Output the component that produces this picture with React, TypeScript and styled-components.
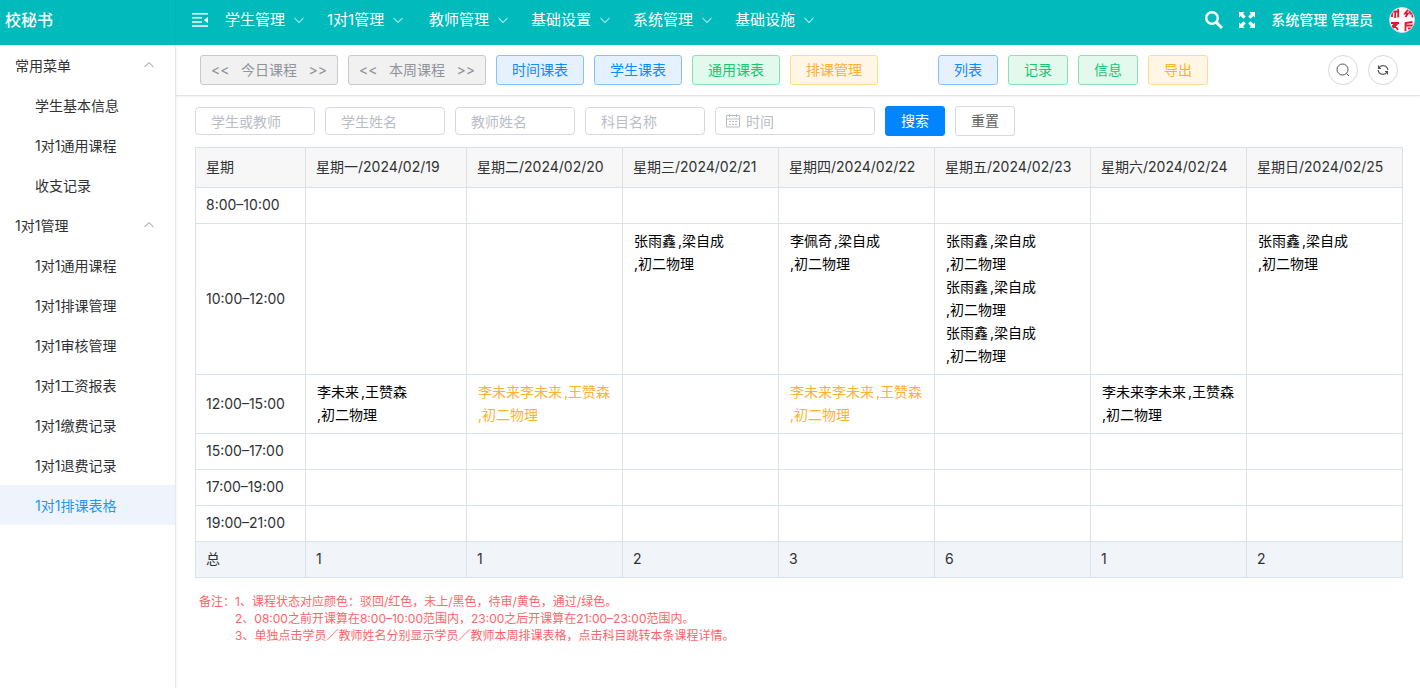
import React, { Fragment } from "react";
import styled, { createGlobalStyle } from "styled-components";

const GlobalStyle = createGlobalStyle`
  *, *::before, *::after { box-sizing: border-box; }
  body {
    margin: 0;
    background: #fff;
    color: #303133;
    font-family: Inter, "Noto Sans CJK SC", sans-serif;
    font-size: 14px;
    line-height: 20px;
  }
  button, input { font-family: inherit; }
  a { color: inherit; text-decoration: none; }
  ul { list-style: none; margin: 0; padding: 0; }
`;

const Page = styled.div`
  display: grid;
  grid-template-columns: 176px minmax(0, 1fr);
  grid-template-rows: auto 1fr;
  min-height: 100vh;
`;

const Brand = styled.div`
  display: flex;
  align-items: center;
  height: 45px;
  padding: 0 5px 5px;
  background: #00babc;
  border-right: 1px solid #00b0b3;
  color: #fff;
  font-size: 16px;
  font-weight: 500;
`;

const TopBar = styled.header`
  display: flex;
  align-items: center;
  height: 45px;
  padding: 0 5px 5px 16px;
  background: #00babc;
  color: #fff;
`;

const IconButton = styled.button`
  display: flex;
  padding: 0;
  border: 0;
  background: none;
  color: inherit;
  cursor: pointer;
`;

const TopNav = styled.nav`
  display: flex;
  flex: 1;
  padding-left: 17px;
`;

const TopNavItem = styled.a`
  display: flex;
  align-items: center;
  gap: 8px;
  width: 80px;
  margin-right: 22px;
  font-size: 15px;
  white-space: nowrap;
`;

const UserArea = styled.div`
  display: flex;
  align-items: center;
  gap: 16px;
`;

const UserName = styled.span`
  font-weight: 500;
  white-space: nowrap;
`;

const Sidebar = styled.nav`
  border-right: 1px solid #e9e9eb;
  box-shadow: 1px 0 2px rgba(0, 0, 0, 0.05);
`;

const GroupToggle = styled.button`
  display: flex;
  align-items: center;
  justify-content: space-between;
  width: 100%;
  height: 40px;
  padding: 0 20px 0 15px;
  border: 0;
  background: none;
  color: #303133;
  font-size: 14px;
  svg { color: #909399; }
`;

const SideLink = styled.a<{ $active?: boolean }>`
  display: flex;
  align-items: center;
  height: 40px;
  padding: 2px 0 0 35px;
  background: ${(p) => (p.$active ? "#eff4fc" : "transparent")};
  color: ${(p) => (p.$active ? "#2196f8" : "#303133")};
`;

const Toolbar = styled.div`
  display: flex;
  align-items: center;
  gap: 10px;
  height: 51px;
  padding: 0 22px 0 24px;
  border-bottom: 1px solid #e4e4e6;
  box-shadow: 0 1px 2px rgba(0, 0, 0, 0.06);
`;

const tones = {
  info: { bg: "#f1f1f2", line: "#c8c9cc", text: "#909399" },
  primary: { bg: "#e5f1ff", line: "#85c3ff", text: "#1289ff" },
  success: { bg: "#e3f9ee", line: "#86e2b2", text: "#16c76c" },
  warning: { bg: "#fff6e6", line: "#ffdc8c", text: "#ffb02e" },
};

const Button = styled.button<{ $tone?: keyof typeof tones; $solid?: boolean }>`
  height: 30px;
  padding: 0 15px;
  border: 1px solid
    ${(p) => (p.$solid ? "#0084ff" : p.$tone ? tones[p.$tone].line : "#d6d9e2")};
  border-radius: 3px;
  background: ${(p) => (p.$solid ? "#0084ff" : p.$tone ? tones[p.$tone].bg : "#fff")};
  color: ${(p) => (p.$solid ? "#fff" : p.$tone ? tones[p.$tone].text : "#606266")};
  font-size: 14px;
  line-height: 20px;
  white-space: nowrap;
  cursor: pointer;
`;

const Stepper = styled.div`
  display: flex;
  align-items: center;
  justify-content: space-between;
  width: 138px;
  height: 30px;
  padding: 0 10px;
  border: 1px solid ${tones.info.line};
  border-radius: 3px;
  background: ${tones.info.bg};
  color: ${tones.info.text};
`;

const StepButton = styled(IconButton)`
  font-size: 14px;
  line-height: 20px;
`;

const ButtonGroup = styled.div`
  display: flex;
  flex: 1;
  gap: 10px;
  padding-left: 50px;
`;

const RoundButton = styled.button`
  display: flex;
  align-items: center;
  justify-content: center;
  width: 30px;
  height: 30px;
  padding: 0;
  border: 1px solid #d6d9e2;
  border-radius: 50%;
  background: #fff;
  color: #505256;
`;

const Content = styled.main`
  padding: 10px 17px 24px 19px;
`;

const Filters = styled.form`
  display: flex;
  align-items: center;
  gap: 10px;
  margin-bottom: 11px;
`;

const Field = styled.label<{ $wide?: boolean }>`
  display: flex;
  align-items: center;
  gap: 6px;
  width: ${(p) => (p.$wide ? 160 : 120)}px;
  height: 28px;
  padding: 0 ${(p) => (p.$wide ? 10 : 15)}px;
  border: 1px solid #d6d9e2;
  border-radius: 4px;
  color: #b9bdc6;
  svg { flex: none; }
`;

const TextInput = styled.input`
  width: 100%;
  min-width: 0;
  height: 26px;
  padding: 0;
  border: 0;
  outline: 0;
  background: none;
  color: #606266;
  font-size: 14px;
  &::placeholder { color: #b9bdc6; opacity: 1; }
`;

const Schedule = styled.table`
  width: 100%;
  table-layout: fixed;
  border-collapse: collapse;
  th, td {
    padding: 5px 10px 7px;
    border: 1px solid #d9e1e9;
    font-weight: 400;
    line-height: 23px;
    text-align: left;
    white-space: nowrap;
  }
  thead th { height: 40px; background: #f7f7f7; }
  tbody td { vertical-align: top; }
  tfoot th, tfoot td { background: #f1f5f9; }
`;

const TimeCol = styled.col` width: 110px; `;
const MondayCol = styled.col` width: 161px; `;

const Lesson = styled.div<{ $pending?: boolean }>`
  padding-left: 1px;
  color: ${(p) => (p.$pending ? "#ffb130" : "#000")};
`;

const Student = styled.a`
  margin-right: 2px;
`;

const Notes = styled.div`
  display: flex;
  padding: 15px 4px;
  color: #ff6468;
  font-size: 12px;
  line-height: 17px;
  ol { list-style: none; margin: 0; padding: 0; }
`;

const Chevron = ({ up }: { up?: boolean }) => (
  <svg width="12" height="12" viewBox="0 0 12 12" fill="none" stroke="currentColor" strokeWidth="1">
    <path d={up ? "M1.5 8 6 3.5 10.5 8" : "M1.5 4 6 8.5 10.5 4"} />
  </svg>
);

const FoldIcon = () => (
  <svg width="16" height="14" viewBox="0 0 16 14" fill="currentColor">
    <path d="M0 0h16v1.5H0zM0 4h10v1.5H0zM0 8.300h10v1.500H0zM0 12.300h16v1.500H0zM16 4v6L11.800 7z" />
  </svg>
);

const SearchIcon = () => (
  <svg width="18" height="18" viewBox="0 0 18 18" fill="none" stroke="currentColor" strokeWidth="2.4">
    <circle cx="7" cy="7" r="5.8" />
    <path d="M11.2 11.2 17 17" strokeWidth="3" />
  </svg>
);

const FullscreenIcon = () => (
  <svg width="16" height="16" viewBox="0 0 16 16" fill="currentColor">
    <path d="M0 0h5.600L4 1.600 6.700 4.500 4.500 6.700 1.600 4 0 5.600zM16 0v5.600L14.400 4l-2.900 2.700-2.200-2.200L12 1.600 10.400 0zM0 16v-5.600L1.600 12l2.900-2.700 2.200 2.200L4 14.400 5.600 16zM16 16h-5.600l1.600-1.600-2.700-2.900 2.200-2.200 2.900 2.700 1.600-1.600z" />
  </svg>
);

const Avatar = () => (
  <svg width="26" height="26" viewBox="0 0 26 26" role="img" aria-label="avatar">
    <defs>
      <clipPath id="avatar-disc"><circle cx="13" cy="13" r="12" /></clipPath>
    </defs>
    <circle cx="13" cy="13" r="12.5" fill="#fff" stroke="#d8dce6" />
    <g clipPath="url(#avatar-disc)" stroke="#e5172f" strokeWidth="1.8" fill="none">
      <path d="M2 4.500h8M3 4v6M6.200 4v7M9.200 2v8.500" />
      <path d="M19.500 2 16 6.500h3L16.500 10M20 3.500l4 4M20.500 6.500h3V10.500" />
      <path d="M2 16h8M4 16l5 7M9 16l-6 6M3 19h4" />
      <path d="M16.500 24v-8l7-1M17 18.500h8M19 21.500h5v3" />
    </g>
  </svg>
);

const ThinSearchIcon = () => (
  <svg width="14" height="14" viewBox="0 0 14 14" fill="none" stroke="currentColor">
    <circle cx="6.5" cy="6.5" r="5.5" />
    <path d="M10.5 10.5 13 13" />
  </svg>
);

const RefreshIcon = () => (
  <svg width="12" height="12" viewBox="0 0 12 12" fill="none" stroke="currentColor" strokeWidth="1.200">
    <path d="M1.800 4.200A4.800 4.800 0 0 1 10.800 6M10.200 7.800A4.800 4.800 0 0 1 1.200 6M1.500 1.500v3h2.500M10.500 10.500v-3H8" />
  </svg>
);

const CalendarIcon = () => (
  <svg width="14" height="14" viewBox="0 0 14 14" fill="none" stroke="currentColor">
    <path d="M.5 1.500h13v11.500H.5zM.5 5h13M3.500 0v3M10.500 0v3" />
    <path d="M3 7.500h2M6 7.500h2M9 7.500h2M3 10.500h2M6 10.500h2M9 10.500h2" />
  </svg>
);

const topMenu = ["学生管理", "1对1管理", "教师管理", "基础设置", "系统管理", "基础设施"];

const sideGroups = [
  { title: "常用菜单", items: ["学生基本信息", "1对1通用课程", "收支记录"] },
  {
    title: "1对1管理",
    items: [
      "1对1通用课程", "1对1排课管理", "1对1审核管理", "1对1工资报表",
      "1对1缴费记录", "1对1退费记录", "1对1排课表格",
    ],
  },
];
const activeItem = "1对1排课表格";

const days = [
  "星期一/2024/02/19", "星期二/2024/02/20", "星期三/2024/02/21", "星期四/2024/02/22",
  "星期五/2024/02/23", "星期六/2024/02/24", "星期日/2024/02/25",
];

type Entry = { student: string; teacher: string; pending?: boolean };
const zhang: Entry = { student: "张雨鑫", teacher: "梁自成" };
const peiqi: Entry = { student: "李佩奇", teacher: "梁自成" };
const weilai: Entry = { student: "李未来", teacher: "王赞森" };
const pair: Entry = { student: "李未来李未来", teacher: "王赞森" };
const pairPending: Entry = { ...pair, pending: true };

const rows: { time: string; cells: Entry[][] }[] = [
  { time: "8:00–10:00", cells: [[], [], [], [], [], [], []] },
  { time: "10:00–12:00", cells: [[], [], [zhang], [peiqi], [zhang, zhang, zhang], [], [zhang]] },
  { time: "12:00–15:00", cells: [[weilai], [pairPending], [], [pairPending], [], [pair], []] },
  { time: "15:00–17:00", cells: [[], [], [], [], [], [], []] },
  { time: "17:00–19:00", cells: [[], [], [], [], [], [], []] },
  { time: "19:00–21:00", cells: [[], [], [], [], [], [], []] },
];
const totals = [1, 1, 2, 3, 6, 1, 2];

export default function App() {
  return (
    <Page>
      <GlobalStyle />
      <Brand>校秘书</Brand>
      <TopBar>
        <IconButton aria-label="收起菜单"><FoldIcon /></IconButton>
        <TopNav>
          {topMenu.map((item) => (
            <TopNavItem href="#" key={item}>{item}<Chevron /></TopNavItem>
          ))}
        </TopNav>
        <UserArea>
          <IconButton aria-label="搜索"><SearchIcon /></IconButton>
          <IconButton aria-label="全屏"><FullscreenIcon /></IconButton>
          <UserName>系统管理 管理员</UserName>
          <Avatar />
        </UserArea>
      </TopBar>

      <Sidebar>
        {sideGroups.map((group) => (
          <Fragment key={group.title}>
            <GroupToggle>{group.title}<Chevron up /></GroupToggle>
            <ul>
              {group.items.map((item) => (
                <li key={item}>
                  <SideLink href="#" $active={item === activeItem}>{item}</SideLink>
                </li>
              ))}
            </ul>
          </Fragment>
        ))}
      </Sidebar>

      <div>
        <Toolbar>
          {["今日课程", "本周课程"].map((label) => (
            <Stepper key={label}>
              <StepButton>&lt;&lt;</StepButton>
              <span>{label}</span>
              <StepButton>&gt;&gt;</StepButton>
            </Stepper>
          ))}
          <Button $tone="primary">时间课表</Button>
          <Button $tone="primary">学生课表</Button>
          <Button $tone="success">通用课表</Button>
          <Button $tone="warning">排课管理</Button>
          <ButtonGroup>
            <Button $tone="primary">列表</Button>
            <Button $tone="success">记录</Button>
            <Button $tone="success">信息</Button>
            <Button $tone="warning">导出</Button>
          </ButtonGroup>
          <RoundButton aria-label="查找"><ThinSearchIcon /></RoundButton>
          <RoundButton aria-label="刷新"><RefreshIcon /></RoundButton>
        </Toolbar>

        <Content>
          <Filters>
            {["学生或教师", "学生姓名", "教师姓名", "科目名称"].map((name) => (
              <Field key={name}>
                <TextInput placeholder={name} aria-label={name} />
              </Field>
            ))}
            <Field $wide>
              <CalendarIcon />
              <TextInput placeholder="时间" aria-label="时间" />
            </Field>
            <Button type="button" $solid>搜索</Button>
            <Button type="reset">重置</Button>
          </Filters>

          <Schedule>
            <colgroup>
              <TimeCol />
              <MondayCol />
              <col span={6} />
            </colgroup>
            <thead>
              <tr>
                <th scope="col">星期</th>
                {days.map((day) => <th scope="col" key={day}>{day}</th>)}
              </tr>
            </thead>
            <tbody>
              {rows.map((row) => (
                <tr key={row.time}>
                  <th scope="row">{row.time}</th>
                  {row.cells.map((entries, day) => (
                    <td key={day}>
                      {entries.map((entry, i) => (
                        <Lesson key={i} $pending={entry.pending}>
                          <Student href="#">{entry.student}</Student>,<a href="#">{entry.teacher}</a>
                          <br />,<a href="#">初二物理</a>
                        </Lesson>
                      ))}
                    </td>
                  ))}
                </tr>
              ))}
            </tbody>
            <tfoot>
              <tr>
                <th scope="row">总</th>
                {totals.map((total, day) => <td key={day}>{total}</td>)}
              </tr>
            </tfoot>
          </Schedule>

          <Notes>
            <span>备注：</span>
            <ol>
              <li>1、课程状态对应颜色：驳回/红色，未上/黑色，待审/黄色，通过/绿色。</li>
              <li>2、08:00之前开课算在8:00–10:00范围内，23:00之后开课算在21:00–23:00范围内。</li>
              <li>3、单独点击学员／教师姓名分别显示学员／教师本周排课表格，点击科目跳转本条课程详情。</li>
            </ol>
          </Notes>
        </Content>
      </div>
    </Page>
  );
}
